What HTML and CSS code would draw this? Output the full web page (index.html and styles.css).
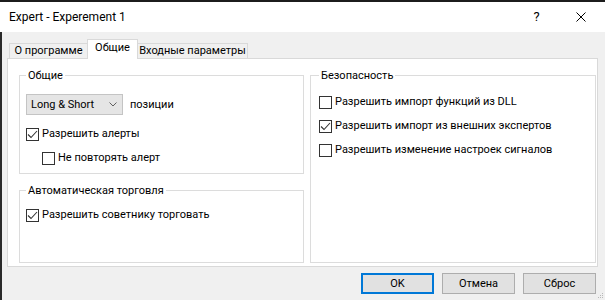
FILE: index.html
```html
<!DOCTYPE html>
<html lang="ru">
<head>
  <meta charset="UTF-8" />
  <title>Expert - Experement 1</title>
  <link rel="stylesheet" href="styles.css">
</head>
<body>
  <div class="window">
    <div class="titlebar">
      <span class="title">Expert - Experement 1</span>
      <span class="help">?</span>
      <span class="close">
        <svg width="10" height="10" viewBox="0 0 10 10"><path d="M0.5 0.5L9.5 9.5M9.5 0.5L0.5 9.5" stroke="#000" stroke-width="1"/></svg>
      </span>
    </div>

    <div class="client">
      <div class="tabs">
        <div class="tab first">О программе</div>
        <div class="tab active">Общие</div>
        <div class="tab last">Входные параметры</div>
      </div>

      <div class="panel">
        <div class="col">
          <fieldset class="group g-common">
            <legend>Общие</legend>
            <div class="row">
              <div class="combo">
                <span>Long &amp; Short</span>
                <svg width="8" height="5" viewBox="0 0 8 5"><path d="M0.5 0.5L4 4L7.5 0.5" fill="none" stroke="#606060" stroke-width="1"/></svg>
              </div>
              <span class="combo-label">позиции</span>
            </div>
            <div class="check">
              <span class="box"><svg width="11" height="11" viewBox="0 0 11 11"><path d="M1 5.5L4 8.5L10 2" fill="none" stroke="#333" stroke-width="1.1"/></svg></span>
              <span>Разрешить алерты</span>
            </div>
            <div class="check sub">
              <span class="box"></span>
              <span>Не повторять алерт</span>
            </div>
          </fieldset>

          <fieldset class="group g-auto">
            <legend>Автоматическая торговля</legend>
            <div class="check">
              <span class="box"><svg width="11" height="11" viewBox="0 0 11 11"><path d="M1 5.5L4 8.5L10 2" fill="none" stroke="#333" stroke-width="1.1"/></svg></span>
              <span>Разрешить советнику торговать</span>
            </div>
          </fieldset>
        </div>

        <fieldset class="group g-sec">
          <legend>Безопасность</legend>
          <div class="check">
            <span class="box"></span>
            <span>Разрешить импорт функций из DLL</span>
          </div>
          <div class="check">
            <span class="box"><svg width="11" height="11" viewBox="0 0 11 11"><path d="M1 5.5L4 8.5L10 2" fill="none" stroke="#333" stroke-width="1.1"/></svg></span>
            <span>Разрешить импорт из внешних экспертов</span>
          </div>
          <div class="check">
            <span class="box"></span>
            <span>Разрешить изменение настроек сигналов</span>
          </div>
        </fieldset>
      </div>

      <div class="footer">
        <button class="btn default">OK</button>
        <button class="btn">Отмена</button>
        <button class="btn">Сброс</button>
      </div>
    </div>

    <svg class="grip" width="6" height="6" viewBox="0 0 6 6">
      <rect x="4" y="0" width="1" height="1" fill="#b8b8b8"/>
      <rect x="2" y="2" width="1" height="1" fill="#b8b8b8"/>
      <rect x="4" y="2" width="1" height="1" fill="#b8b8b8"/>
      <rect x="0" y="4" width="1" height="1" fill="#b8b8b8"/>
      <rect x="2" y="4" width="1" height="1" fill="#b8b8b8"/>
      <rect x="4" y="4" width="1" height="1" fill="#b8b8b8"/>
    </svg>
  </div>
</body>
</html>
```

FILE: styles.css
```css
* {
  margin: 0;
  padding: 0;
  box-sizing: border-box;
}
body {
  background: #1c1c1c;
  font-family: Roboto, "Liberation Sans", sans-serif;
  font-size: 11px;
  line-height: 16px;
  color: #000;
  width: 605px;
  height: 300px;
  overflow: hidden;
  white-space: nowrap;
}
.window {
  position: relative;
  margin-top: 2px;
  height: 298px;
  display: flex;
  flex-direction: column;
}
.titlebar {
  height: 30px;
  background: #fff;
  display: flex;
  align-items: center;
  padding-left: 9px;
  font-size: 12px;
}
.help {
  margin-left: auto;
  width: 43px;
  text-align: center;
  font-size: 13px;
}
.close {
  width: 46px;
  margin-right: 1px;
  display: flex;
  justify-content: center;
}
.client {
  flex: 1;
  background: #f0f0f0;
  border-left: 2px solid #2a2a2a;
  padding: 7px 0 0 5px;
}
.tabs {
  display: flex;
  align-items: flex-end;
  margin-left: 2px;
  margin-bottom: -1px;
  position: relative;
  z-index: 1;
}
.tab {
  height: 15px;
  margin-bottom: 1px;
  border: 1px solid #d9d9d9;
  border-bottom: none;
  background: #f0f0f0;
  text-align: center;
  line-height: 14px;
}
.tab.first {
  width: 78px;
  border-right: none;
}
.tab.active {
  width: 51px;
  height: 20px;
  margin-bottom: 0;
  background: #fff;
  line-height: 16px;
}
.tab.last {
  width: 110px;
  border-left: none;
}
.panel {
  width: 591px;
  height: 209px;
  background: #fff;
  border: 1px solid #d9d9d9;
  padding: 9px 1px 3px 11px;
  display: grid;
  grid-template-columns: 285px 286px;
  column-gap: 6px;
}
.col {
  display: flex;
  flex-direction: column;
  gap: 9px;
}
.group {
  border: 1px solid #dcdcdc;
  min-width: 0;
}
.group legend {
  line-height: 15px;
  padding: 0 2px;
}
.g-common {
  padding: 11px 6px 7px;
}
.g-auto {
  flex: 1;
  padding: 9px 6px 0;
}
.g-sec {
  padding: 11px 8px 0;
}
.row {
  display: flex;
  align-items: center;
  gap: 7px;
}
.combo {
  width: 97px;
  height: 21px;
  background: #e5e5e5;
  border: 1px solid #c4c4c4;
  display: flex;
  align-items: center;
  justify-content: space-between;
  padding: 0 5px 0 4px;
}
.check {
  display: flex;
  align-items: center;
  gap: 3px;
  height: 16px;
}
.g-common .check {
  margin-top: 11px;
}
.g-common .check.sub {
  margin-top: 8px;
  margin-left: 16px;
}
.g-sec .check + .check {
  margin-top: 8px;
}
.box {
  width: 13px;
  height: 13px;
  border: 1px solid #333;
  background: #fff;
  display: flex;
  align-items: center;
  justify-content: center;
}
.footer {
  display: flex;
  justify-content: flex-end;
  gap: 8px;
  padding: 6px 9px 0 0;
}
.btn {
  width: 73px;
  height: 21px;
  background: #e1e1e1;
  border: 1px solid #adadad;
  font-family: inherit;
  font-size: 11px;
  color: #000;
}
.btn.default {
  border: 2px solid #0078d7;
}
.grip {
  position: absolute;
  right: 1px;
  bottom: 1px;
}
```
